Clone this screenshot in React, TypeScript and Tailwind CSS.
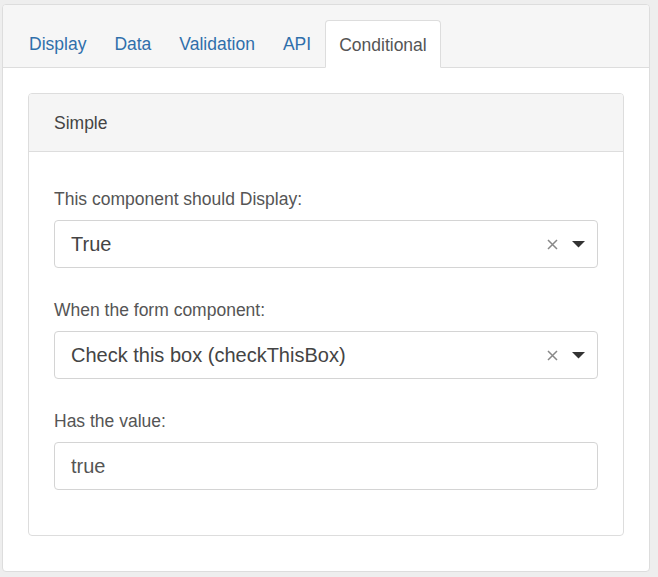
const tabs = ['Display', 'Data', 'Validation', 'API', 'Conditional']

const ClearIcon = () => (
  <svg width="11" height="11" viewBox="0 0 11 11" className="text-[#888]">
    <path d="M1 1L10 10M10 1L1 10" stroke="currentColor" strokeWidth="1.5" />
  </svg>
)

const Caret = () => (
  <svg width="13" height="7" viewBox="0 0 13 7">
    <path d="M0 0H13L6.5 6.5Z" fill="#333" />
  </svg>
)

const Label = ({ children, first }: { children: string; first?: boolean }) => (
  <div
    className={`mb-[8px] h-[25px] text-[17.5px] leading-[25px] text-[#555] ${first ? '' : 'mt-[30px]'}`}
  >
    {children}
  </div>
)

const Select = ({ value }: { value: string }) => (
  <div className="flex h-[48px] items-center rounded-[4px] border border-[#d4d4d4] bg-white pl-[16px] pr-[12px]">
    <span className="flex-1 text-[20px] text-[#444]">{value}</span>
    <div className="flex items-center gap-[14px]">
      <ClearIcon />
      <Caret />
    </div>
  </div>
)

export default function App() {
  return (
    <div className="min-h-[577px] bg-[#eeeeee] pb-[5px] pl-[2px] pt-[4px] font-['Liberation_Sans',Arial,sans-serif]">
      <div className="w-[648px] overflow-hidden rounded-[4px] border border-[#dddddd] bg-white">
        <div className="flex border-b border-[#dddddd] bg-[#f6f6f6] pl-[12px] pt-[15px]">
          {tabs.map((t) =>
            t === 'Conditional' ? (
              <div
                key={t}
                className="-mb-px flex h-[48px] items-center rounded-t-[4px] border border-[#dddddd] border-b-white bg-white px-[13px] pt-[2px] text-[17.5px] text-[#555]"
              >
                {t}
              </div>
            ) : (
              <div
                key={t}
                className="flex h-[47px] items-center border border-transparent px-[13px] pt-[2px] text-[17.5px] text-[#2f6fab]"
              >
                {t}
              </div>
            ),
          )}
        </div>

        <div className="px-[25px] pb-[35px] pt-[25px]">
          <div className="overflow-hidden rounded-[4px] border border-[#dddddd]">
            <div className="flex h-[58px] items-center border-b border-[#dddddd] bg-[#f5f5f5] px-[25px] pt-[2px] text-[17.5px] text-[#444]">
              Simple
            </div>
            <div className="px-[25px] pb-[45px] pt-[35px]">
              <Label first>This component should Display:</Label>
              <Select value="True" />

              <Label>When the form component:</Label>
              <Select value="Check this box (checkThisBox)" />

              <Label>Has the value:</Label>
              <div className="flex h-[48px] items-center rounded-[4px] border border-[#d4d4d4] bg-white pl-[16px] text-[20px] text-[#555]">
                true
              </div>
            </div>
          </div>
        </div>
      </div>
    </div>
  )
}
